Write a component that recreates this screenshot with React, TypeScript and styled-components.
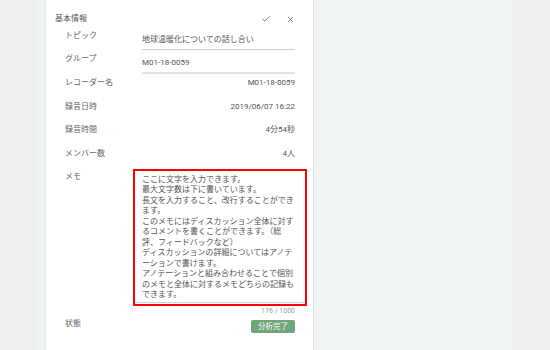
import React from "react";
import styled, {createGlobalStyle} from "styled-components";
import {Check, X} from "lucide-react";

const GlobalStyle = createGlobalStyle`
  html, body {
    margin: 0;
    padding: 0;
    background: #efefef;
  }
  body {
    font-family: Roboto, "Noto Sans CJK JP", sans-serif;
  }
`

const memoText = `ここに文字を入力できます。
最大文字数は下に書いています。
長文を入力すること、改行することができます。
このメモにはディスカッション全体に対するコメントを書くことができます。（総評、フィードバックなど）
ディスカッションの詳細についてはアノテーションで書けます。
アノテーションと組み合わせることで個別のメモと全体に対するメモどちらの記録もできます。`

const infoRows = [
    {label: 'レコーダー名', value: 'M01-18-0059'},
    {label: '録音日時', value: '2019/06/07 16:22'},
    {label: '録音時間', value: '4分54秒'},
    {label: 'メンバー数', value: '4人'},
]

const Page = styled.div`
  display: flex;
  height: 350px;
  overflow: hidden;
  background: #efefef;
`

const Gutter = styled.div<{ width?: number }>`
  width: ${props => props.width ? `${props.width}px` : 'auto'};
  flex: ${props => props.width ? 'none' : 1};
  background: #efefef;
`

const Stage = styled.div`
  width: 477px;
  box-sizing: border-box;
  padding-left: 9px;
  background: #f1f4f5;
  display: flex;
`

const Card = styled.section`
  width: 269px;
  box-sizing: border-box;
  background: #fff;
  border-left: 1px solid #e6e9eb;
  border-right: 1px solid #dfe3e5;
  padding: 13px 18px 0 9px;
  font-size: 8px;
  color: #555;
`

const Header = styled.div`
  display: flex;
  align-items: center;
  justify-content: space-between;
  height: 12px;
  line-height: 12px;
  color: #555;
`

const Actions = styled.div`
  display: flex;
  align-items: center;
  gap: 15px;
  color: #444;

  svg {
    display: block;
  }
`

const Row = styled.div<{ height?: number }>`
  display: grid;
  grid-template-columns: 77px 1fr;
  padding-left: 10px;
  height: ${props => props.height ? `${props.height}px` : 'auto'};
  line-height: 12px;
`

const Label = styled.div<{ top: number }>`
  padding-top: ${props => props.top}px;
  color: #666;
  white-space: nowrap;
`

const Field = styled.div<{ top: number, line: number }>`
  padding: ${props => props.top}px 0 3px;
  border-bottom: ${props => props.line}px solid ${props => props.line > 1 ? '#e3e3e3' : '#cfcfcf'};
  color: #555;
  white-space: nowrap;
`

const Value = styled.div`
  padding-top: 3px;
  text-align: right;
  color: #555;
  white-space: nowrap;
`

const MemoCell = styled.div`
  display: flex;
  flex-direction: column;
`

const MemoBox = styled.div`
  margin: 1px -12px 0 -9px;
  border: 2px solid #f00;
  padding-top: 4px;
  padding-bottom: 1px;
`

const MemoArea = styled.textarea`
  display: block;
  width: 100%;
  box-sizing: border-box;
  height: 127.5px;
  margin: 0;
  padding: 0 8px 2px 7px;
  border: none;
  border-bottom: 1px solid #d6d6d6;
  outline: none;
  resize: none;
  overflow: hidden;
  font-family: Roboto, "Noto Sans CJK JP", sans-serif;
  font-size: 8px;
  line-height: 10.45px;
  color: #555;
  background: #fff;
`

const Counter = styled.div`
  text-align: right;
  font-size: 7px;
  line-height: 10px;
  color: #9a9a9a;
`

const Badge = styled.span`
  justify-self: end;
  margin-top: 4px;
  height: 13px;
  padding: 0 7px;
  border-radius: 2px;
  background: #6fa67b;
  color: #fff;
  font-size: 7.5px;
  line-height: 13px;
`

export default function App() {
    return <>
        <GlobalStyle/>
        <Page>
            <Gutter width={36}/>
            <Stage>
                <Card>
                    <Header>
                        <span>基本情報</span>
                        <Actions>
                            <Check size={10} strokeWidth={1.7}/>
                            <X size={9} strokeWidth={1.7}/>
                        </Actions>
                    </Header>
                    <Row>
                        <Label top={5}>トピック</Label>
                        <Field top={9} line={1}>地球温暖化についての話し合い</Field>
                    </Row>
                    <Row>
                        <Label top={3}>グループ</Label>
                        <Field top={7} line={2}>M01-18-0059</Field>
                    </Row>
                    {infoRows.map(item => <Row key={item.label} height={23.5}>
                        <Label top={3}>{item.label}</Label>
                        <Value>{item.value}</Value>
                    </Row>)}
                    <Row>
                        <Label top={3}>メモ</Label>
                        <MemoCell>
                            <MemoBox>
                                <MemoArea defaultValue={memoText} spellCheck={false}/>
                            </MemoBox>
                            <Counter>176 / 1000</Counter>
                        </MemoCell>
                    </Row>
                    <Row>
                        <Label top={2}>状態</Label>
                        <Badge>分析完了</Badge>
                    </Row>
                </Card>
            </Stage>
            <Gutter/>
        </Page>
    </>
}
